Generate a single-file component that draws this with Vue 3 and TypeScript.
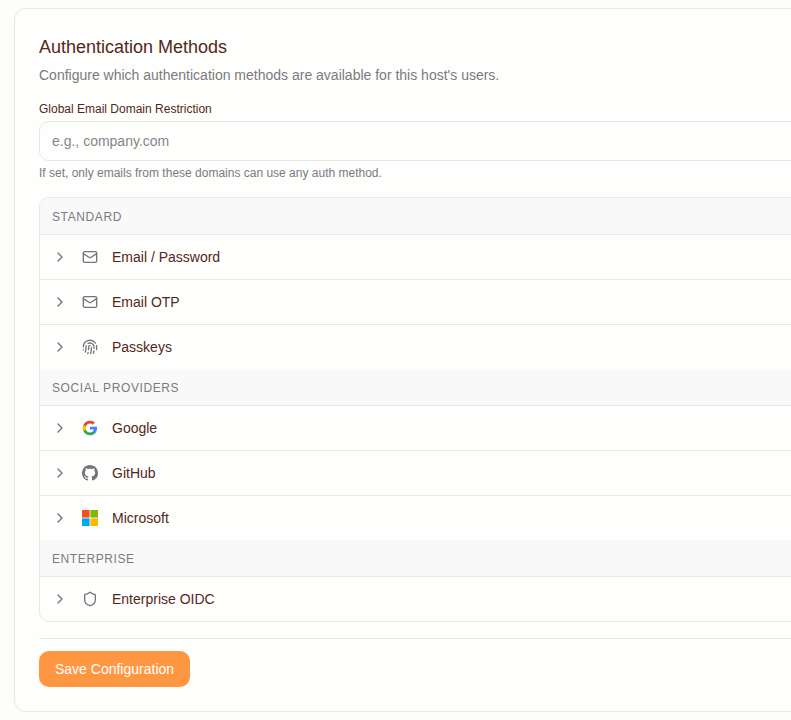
<script setup lang="ts">
type Method = { name: string; icon: string }
type Group = { title: string; methods: Method[] }

const groups: Group[] = [
  {
    title: 'Standard',
    methods: [
      { name: 'Email / Password', icon: 'mail' },
      { name: 'Email OTP', icon: 'mail' },
      { name: 'Passkeys', icon: 'fingerprint' },
    ],
  },
  {
    title: 'Social Providers',
    methods: [
      { name: 'Google', icon: 'google' },
      { name: 'GitHub', icon: 'github' },
      { name: 'Microsoft', icon: 'microsoft' },
    ],
  },
  {
    title: 'Enterprise',
    methods: [{ name: 'Enterprise OIDC', icon: 'shield' }],
  },
]
</script>

<template>
  <div class="page">
    <section class="card">
      <h2 class="title">Authentication Methods</h2>
      <p class="subtitle">Configure which authentication methods are available for this host's users.</p>

      <label class="field-label" for="domain">Global Email Domain Restriction</label>
      <input id="domain" class="field-input" type="text" placeholder="e.g., company.com" />
      <p class="field-help">If set, only emails from these domains can use any auth method.</p>

      <div class="methods">
        <div v-for="group in groups" :key="group.title" class="group">
          <div class="group-title">{{ group.title }}</div>
          <div v-for="method in group.methods" :key="method.name" class="row">
            <svg class="chevron" viewBox="0 0 24 24" fill="none" stroke="currentColor" stroke-width="2" stroke-linecap="round" stroke-linejoin="round">
              <path d="m9 18 6-6-6-6" />
            </svg>
            <span class="icon-box">
              <svg v-if="method.icon === 'mail'" class="icon" viewBox="0 0 24 24" fill="none" stroke="currentColor" stroke-width="2" stroke-linecap="round" stroke-linejoin="round">
                <rect x="2" y="4" width="20" height="16" rx="2" />
                <path d="m22 7-8.97 5.7a1.94 1.94 0 0 1-2.06 0L2 7" />
              </svg>
              <svg v-else-if="method.icon === 'fingerprint'" class="icon" viewBox="0 0 24 24" fill="none" stroke="currentColor" stroke-width="2" stroke-linecap="round" stroke-linejoin="round">
                <path d="M12 10a2 2 0 0 0-2 2c0 1.02-.1 2.51-.26 4" />
                <path d="M14 13.12c0 2.38 0 6.38-1 8.88" />
                <path d="M17.29 21.02c.12-.6.43-2.3.5-3.02" />
                <path d="M2 12a10 10 0 0 1 18-6" />
                <path d="M2 16h.01" />
                <path d="M21.8 16c.2-2 .131-5.354 0-6" />
                <path d="M5 19.5C5.5 18 6 15 6 12a6 6 0 0 1 .34-2" />
                <path d="M8.65 22c.21-.66.45-1.32.57-2" />
                <path d="M9 6.8a6 6 0 0 1 9 5.2v2" />
              </svg>
              <svg v-else-if="method.icon === 'shield'" class="icon" viewBox="0 0 24 24" fill="none" stroke="currentColor" stroke-width="2" stroke-linecap="round" stroke-linejoin="round">
                <path d="M20 13c0 5-3.5 7.5-7.66 8.95a1 1 0 0 1-.67-.01C7.5 20.5 4 18 4 13V6a1 1 0 0 1 1-1c2 0 4.5-1.2 6.24-2.72a1.17 1.17 0 0 1 1.52 0C14.51 3.81 17 5 19 5a1 1 0 0 1 1 1z" />
              </svg>
              <svg v-else-if="method.icon === 'google'" class="icon" viewBox="0 0 24 24">
                <path fill="#4285F4" d="M22.56 12.25c0-.78-.07-1.53-.2-2.25H12v4.26h5.92c-.26 1.37-1.04 2.53-2.21 3.31v2.77h3.57c2.08-1.92 3.28-4.74 3.28-8.09z" />
                <path fill="#34A853" d="M12 23c2.97 0 5.46-.98 7.28-2.66l-3.57-2.77c-.98.66-2.23 1.06-3.71 1.06-2.86 0-5.29-1.93-6.16-4.53H2.18v2.84C3.99 20.53 7.7 23 12 23z" />
                <path fill="#FBBC05" d="M5.84 14.09c-.22-.66-.35-1.36-.35-2.09s.13-1.43.35-2.09V7.07H2.18C1.43 8.55 1 10.22 1 12s.43 3.45 1.18 4.93l2.85-2.22.81-.62z" />
                <path fill="#EA4335" d="M12 5.38c1.62 0 3.06.56 4.21 1.64l3.15-3.15C17.45 2.09 14.97 1 12 1 7.7 1 3.99 3.47 2.18 7.07l3.66 2.84c.87-2.6 3.3-4.53 6.16-4.53z" />
              </svg>
              <svg v-else-if="method.icon === 'github'" class="icon" viewBox="0 0 16 16" fill="currentColor">
                <path d="M8 0C3.58 0 0 3.58 0 8c0 3.54 2.29 6.53 5.47 7.59.4.07.55-.17.55-.38 0-.19-.01-.82-.01-1.49-2.01.37-2.53-.49-2.69-.94-.09-.23-.48-.94-.82-1.13-.28-.15-.68-.52-.01-.53.63-.01 1.08.58 1.23.82.72 1.21 1.87.87 2.33.66.07-.52.28-.87.51-1.07-1.78-.2-3.64-.89-3.64-3.95 0-.87.31-1.59.82-2.15-.08-.2-.36-1.02.08-2.12 0 0 .67-.21 2.2.82.64-.18 1.32-.27 2-.27s1.36.09 2 .27c1.53-1.04 2.2-.82 2.2-.82.44 1.1.16 1.92.08 2.12.51.56.82 1.27.82 2.15 0 3.07-1.87 3.75-3.65 3.95.29.25.54.73.54 1.48 0 1.07-.01 1.93-.01 2.2 0 .21.15.46.55.38A8.01 8.01 0 0 0 16 8c0-4.42-3.58-8-8-8z" />
              </svg>
              <svg v-else class="icon" viewBox="0 0 16 16">
                <rect width="7.6" height="7.6" fill="#f25022" />
                <rect x="8.4" width="7.6" height="7.6" fill="#7fba00" />
                <rect y="8.4" width="7.6" height="7.6" fill="#00a4ef" />
                <rect x="8.4" y="8.4" width="7.6" height="7.6" fill="#ffb900" />
              </svg>
            </span>
            <span class="row-name">{{ method.name }}</span>
          </div>
        </div>
      </div>

      <div class="actions">
        <button class="save" type="button">Save Configuration</button>
      </div>
    </section>
  </div>
</template>

<style>
html,
body {
  background: #fdfdfb;
  overflow: hidden;
}
</style>

<style scoped>
.page {
  padding: 8px 0 8px 14px;
  width: 1000px;
  box-sizing: border-box;
  font-family: "Liberation Sans", Arial, sans-serif;
  color: #53281a;
}

.card {
  box-sizing: border-box;
  height: 704px;
  padding: 24px;
  background: #fefefc;
  border: 1px solid #e8e8e6;
  border-radius: 12px;
}

.title {
  margin: 0;
  font-size: 18px;
  line-height: 28px;
  font-weight: 400;
}

.subtitle {
  margin: 4px 0 16px;
  font-size: 14px;
  line-height: 20px;
  color: #7a7b80;
}

.field-label {
  display: block;
  margin-bottom: 4px;
  font-size: 12px;
  line-height: 16px;
}

.field-input {
  display: block;
  box-sizing: border-box;
  width: 100%;
  height: 40px;
  padding: 0 12px;
  font: inherit;
  font-size: 14px;
  color: #53281a;
  background: #fefefc;
  border: 1px solid #e5e6ea;
  border-radius: 10px;
  outline: none;
}

.field-input::placeholder {
  color: #85868b;
  opacity: 1;
}

.field-help {
  margin: 4px 0 16px;
  font-size: 12px;
  line-height: 16px;
  color: #7a7b80;
}

.methods {
  border: 1px solid #e8e8e6;
  border-radius: 10px;
  overflow: hidden;
}

.group-title {
  box-sizing: border-box;
  height: 36.5px;
  padding: 2px 12px 0;
  display: flex;
  align-items: center;
  font-size: 12px;
  letter-spacing: 0.6px;
  text-transform: uppercase;
  color: #7a7b80;
  background: #f9f9fa;
  border-bottom: 1px solid #e8e8e6;
}

.group:nth-child(2) .group-title {
  height: 36px;
}

.row {
  box-sizing: border-box;
  height: 45px;
  padding: 0 12px;
  display: flex;
  align-items: center;
  gap: 12px;
  border-bottom: 1px solid #e8e8e6;
}

.group .row:last-child {
  height: 44.5px;
  border-bottom: none;
}

.group:first-child .row:last-child {
  height: 45px;
}

.chevron {
  width: 16px;
  height: 16px;
  color: #74757a;
  flex: none;
}

.icon-box {
  width: 20px;
  height: 20px;
  display: flex;
  align-items: center;
  justify-content: center;
  color: #74757a;
  flex: none;
}

.icon {
  width: 16px;
  height: 16px;
}

.row-name {
  font-size: 14px;
}

.actions {
  margin-top: 16px;
  padding-top: 12px;
  border-top: 1px solid #e8e8e6;
}

.save {
  height: 36px;
  padding: 0 16px;
  font: inherit;
  font-size: 14px;
  color: #fff;
  background: #ff9642;
  border: none;
  border-radius: 10px;
}
</style>
